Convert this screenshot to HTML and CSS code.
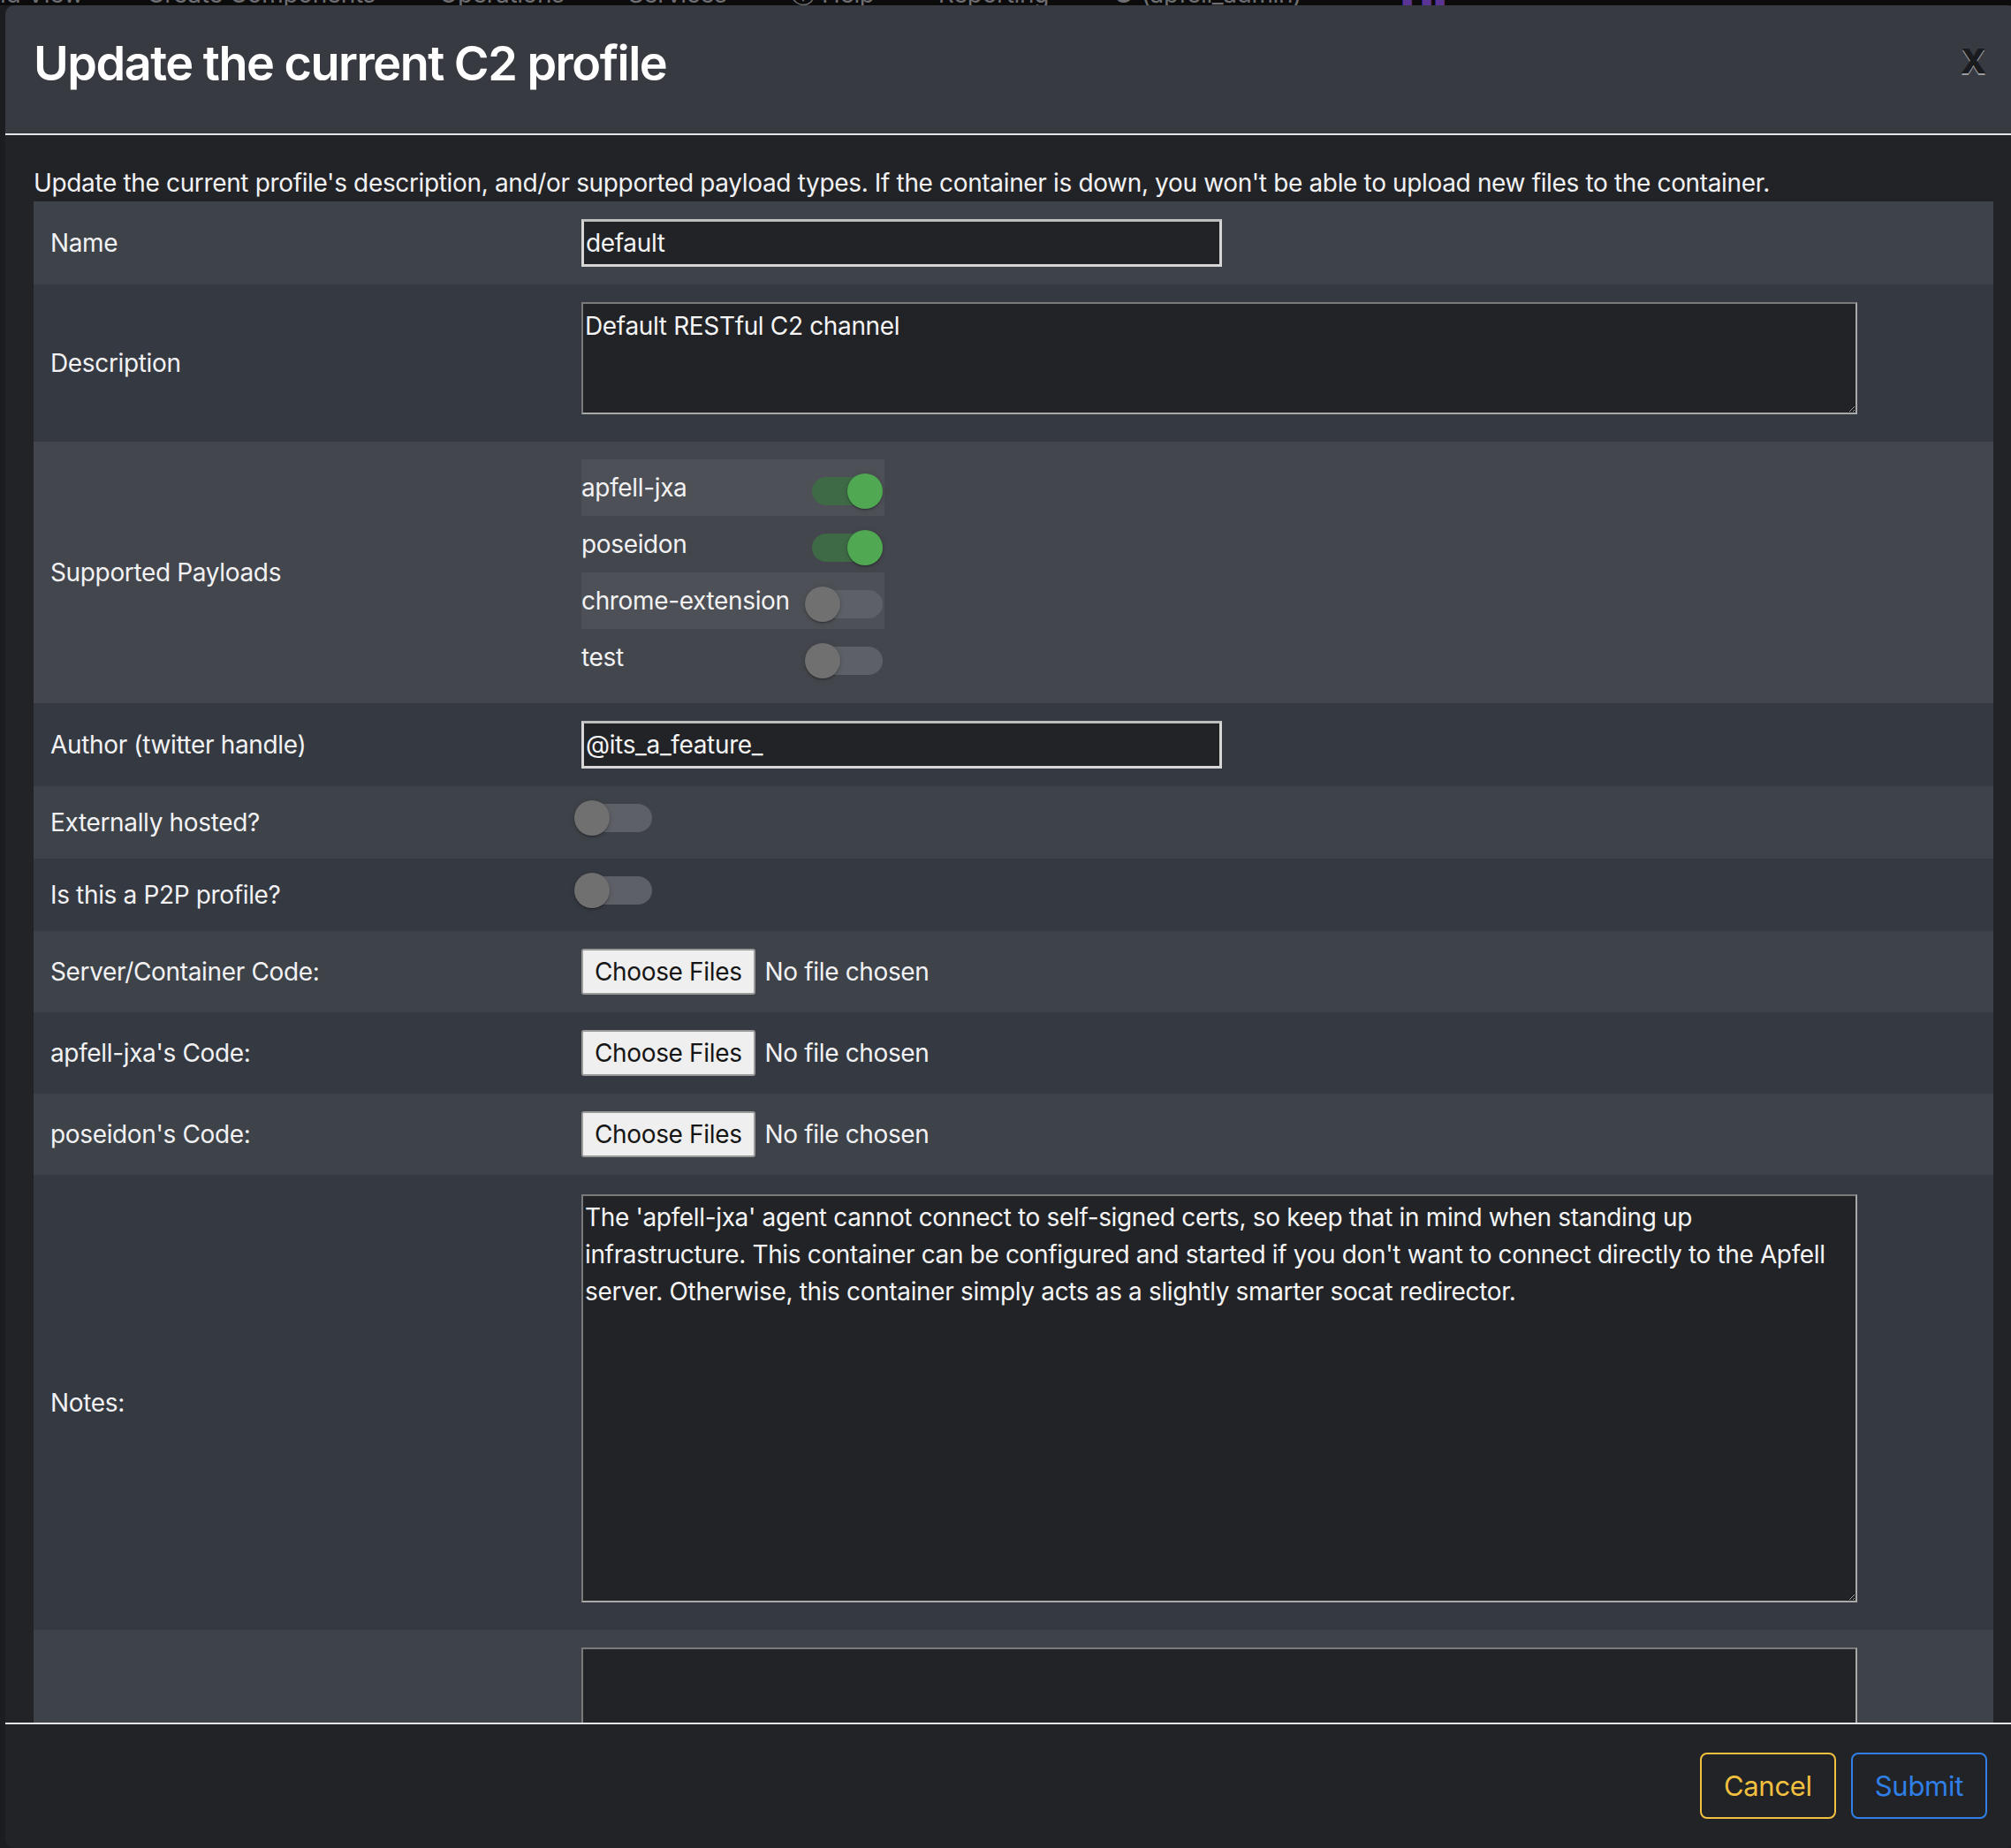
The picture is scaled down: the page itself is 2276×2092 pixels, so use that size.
FILE: index.html
```html
<!DOCTYPE html>
<html lang="en">
<head>
<meta charset="utf-8">
<title>Update the current C2 profile</title>
<link rel="stylesheet" href="styles.css">
</head>
<body>
<nav class="navbar">
  <span class="nav-item nav-first">Command View</span>
  <span class="nav-item">Create Components</span>
  <span class="nav-item">Operations</span>
  <span class="nav-item">Services</span>
  <span class="nav-item">ⓘ Help</span>
  <span class="nav-item">Reporting</span>
  <span class="nav-item">● (apfell_admin)</span>
  <span class="nav-item nav-purple">▮ ▮▮</span>
</nav>

<div class="modal">
  <div class="modal-header">
    <h2 class="modal-title">Update the current C2 profile</h2>
    <button class="close" type="button">X</button>
  </div>

  <div class="modal-body">
    <p class="intro">Update the current profile's description, and/or supported payload types. If the container is down, you won't be able to upload new files to the container.</p>

    <div class="form-table">
      <div class="row light">
        <div class="label">Name</div>
        <div class="value"><input class="text-input" type="text" value="default"></div>
      </div>

      <div class="row dark">
        <div class="label">Description</div>
        <div class="value tall"><textarea class="textarea desc">Default RESTful C2 channel</textarea></div>
      </div>

      <div class="row hover">
        <div class="label">Supported Payloads</div>
        <div class="value">
          <div class="payloads">
            <div class="payload striped"><span>apfell-jxa</span><span class="switch on"><span class="track"></span><span class="thumb"></span></span></div>
            <div class="payload"><span>poseidon</span><span class="switch on"><span class="track"></span><span class="thumb"></span></span></div>
            <div class="payload striped"><span>chrome-extension</span><span class="switch"><span class="track"></span><span class="thumb"></span></span></div>
            <div class="payload"><span>test</span><span class="switch"><span class="track"></span><span class="thumb"></span></span></div>
          </div>
        </div>
      </div>

      <div class="row dark">
        <div class="label">Author (twitter handle)</div>
        <div class="value"><input class="text-input" type="text" value="@its_a_feature_"></div>
      </div>

      <div class="row light">
        <div class="label">Externally hosted?</div>
        <div class="value toggle"><span class="switch"><span class="track"></span><span class="thumb"></span></span></div>
      </div>

      <div class="row dark">
        <div class="label">Is this a P2P profile?</div>
        <div class="value toggle"><span class="switch"><span class="track"></span><span class="thumb"></span></span></div>
      </div>

      <div class="row light">
        <div class="label">Server/Container Code:</div>
        <div class="value file"><button class="file-btn" type="button">Choose Files</button><span class="file-name">No file chosen</span></div>
      </div>

      <div class="row dark">
        <div class="label">apfell-jxa's Code:</div>
        <div class="value file"><button class="file-btn" type="button">Choose Files</button><span class="file-name">No file chosen</span></div>
      </div>

      <div class="row light">
        <div class="label">poseidon's Code:</div>
        <div class="value file"><button class="file-btn" type="button">Choose Files</button><span class="file-name">No file chosen</span></div>
      </div>

      <div class="row dark">
        <div class="label">Notes:</div>
        <div class="value tall notes-cell"><textarea class="textarea notes">The 'apfell-jxa' agent cannot connect to self-signed certs, so keep that in mind when standing up infrastructure. This container can be configured and started if you don't want to connect directly to the Apfell server. Otherwise, this container simply acts as a slightly smarter socat redirector.</textarea></div>
      </div>

      <div class="row light">
        <div class="label"></div>
        <div class="value"><textarea class="textarea extra"></textarea></div>
      </div>
    </div>
  </div>

  <div class="modal-footer">
    <button class="btn btn-cancel" type="button">Cancel</button>
    <button class="btn btn-submit" type="button">Submit</button>
  </div>
</div>
</body>
</html>
```

FILE: styles.css
```css
* {
  box-sizing: border-box;
}

html,
body {
  margin: 0;
  padding: 0;
}

body {
  width: 2276px;
  height: 2092px;
  overflow: hidden;
  background: #1c1d21;
  font-family: Inter, "Noto Sans", sans-serif;
  letter-spacing: -0.35px;
  color: #f2f2f4;
}

/* page behind the modal */
.navbar {
  height: 6px;
  overflow: hidden;
  background: #0b0b0c;
  display: flex;
  gap: 72px;
  font-size: 28px;
  color: #6f6f73;
  white-space: nowrap;
}

.nav-item {
  line-height: 28px;
  margin-top: -21px;
}

.nav-first {
  margin-left: -110px;
}

.nav-purple {
  color: #5a3596;
  margin-left: 40px;
}

/* modal */
.modal {
  position: fixed;
  top: 6px;
  left: 6px;
  width: 2276px;
  height: 2086px;
  display: flex;
  flex-direction: column;
  background: #222327;
  border-radius: 10px;
  overflow: hidden;
}

.modal-header {
  flex: none;
  height: 147px;
  display: flex;
  align-items: flex-start;
  padding: 34px 34px 0 32px;
  background: #373a41;
  border-bottom: 2px solid #e3e5e8;
}

.modal-title {
  margin: 0;
  font-size: 54px;
  line-height: 1.2;
  font-weight: 600;
  color: #ffffff;
  letter-spacing: -1.5px;
}

.close {
  margin-left: auto;
  margin-top: 10px;
  padding: 0;
  border: 0;
  background: none;
  font-family: Inter, "Noto Sans", sans-serif;
  font-size: 38px;
  line-height: 1;
  font-weight: 800;
  color: #1a1b1e;
  text-shadow: 0 2px 0 #9b9ca0;
}

.modal-body {
  flex: 1;
  overflow: hidden;
  padding: 34px 26px 0 32px;
}

.intro {
  margin: 0;
  font-size: 28px;
  line-height: 41px;
  white-space: nowrap;
}

/* form table */
.row {
  display: grid;
  grid-template-columns: 601px 1fr;
  align-items: center;
}

.row.light {
  background: #3e4249;
}

.row.dark {
  background: #353941;
}

.row.hover {
  background: #43464c;
}

.label {
  padding: 0 19px;
  font-size: 28px;
  line-height: 42px;
}

.value {
  padding: 20px 19px;
  font-size: 28px;
  line-height: 42px;
}

.value.tall {
  padding-bottom: 31px;
}

.value.notes-cell {
  padding-top: 22px;
}

.text-input {
  display: block;
  width: 725px;
  height: 54px;
  padding: 0 2px;
  border: 3px solid #d6d6d6;
  border-top-color: #bdbdbd;
  background: #222327;
  color: #f5f5f5;
  font-family: Inter, "Noto Sans", sans-serif;
  font-size: 28px;
  letter-spacing: -0.35px;
}

.textarea {
  display: block;
  width: 1444px;
  padding: 4px 2px 2px;
  border: 2px solid;
  border-color: #7a7a7a #a9a9a9 #a9a9a9 #7a7a7a;
  background: #222327;
  color: #f5f5f5;
  font-family: Inter, "Noto Sans", sans-serif;
  font-size: 28px;
  line-height: 42px;
  letter-spacing: -0.35px;
  resize: both;
}

.textarea.desc {
  height: 127px;
}

.textarea.notes {
  height: 462px;
  padding-top: 3px;
}

.textarea.extra {
  height: 160px;
}

/* switches */
.switch {
  position: relative;
  display: block;
  width: 88px;
  height: 40px;
  flex: none;
}

.track {
  position: absolute;
  left: 8px;
  top: 4px;
  width: 80px;
  height: 32px;
  border-radius: 16px;
  background: #5d6066;
}

.thumb {
  position: absolute;
  left: 0;
  top: 0;
  width: 40px;
  height: 40px;
  border-radius: 50%;
  background: #707070;
  box-shadow: 0 2px 2px -1px rgba(0, 0, 0, 0.25), 0 1px 2px rgba(0, 0, 0, 0.16), 0 1px 6px rgba(0, 0, 0, 0.14);
}

.switch.on .track {
  background: #3f6a46;
}

.switch.on .thumb {
  left: 48px;
  background: #50a853;
}

.payloads {
  display: flex;
  flex-direction: column;
  width: max-content;
}

.payload {
  display: flex;
  align-items: center;
  justify-content: space-between;
  gap: 17px;
  height: 64px;
  padding-right: 2px;
}

.payload.striped {
  background: #4d5056;
}

.payload .switch {
  margin-top: 8px;
}

.value.toggle {
  padding: 16px 19px 16px 11px;
}

.value.toggle .switch {
  margin-bottom: 10px;
}

/* file inputs */
.value.file {
  display: flex;
  align-items: center;
}

.file-btn {
  height: 52px;
  padding: 0 13px;
  background: #efefef;
  border: 2px solid #9a9a9a;
  border-radius: 3px;
  color: #151515;
  font-family: Inter, "Noto Sans", sans-serif;
  font-size: 28px;
  letter-spacing: -0.35px;
}

.file-name {
  margin-left: 11px;
}

/* footer */
.modal-footer {
  flex: none;
  height: 142px;
  display: flex;
  justify-content: flex-end;
  align-items: flex-start;
  gap: 17px;
  padding: 32px 33px 0 0;
  border-top: 2px solid #e3e5e8;
  background: #222327;
}

.btn {
  height: 75px;
  padding: 0 25px;
  border: 2px solid;
  border-radius: 8px;
  background: transparent;
  font-family: Inter, "Noto Sans", sans-serif;
  font-size: 31px;
  letter-spacing: -0.3px;
}

.btn-cancel {
  color: #f2c03f;
  border-color: #f2c03f;
}

.btn-submit {
  color: #2f7fe6;
  border-color: #2f7fe6;
}
```
